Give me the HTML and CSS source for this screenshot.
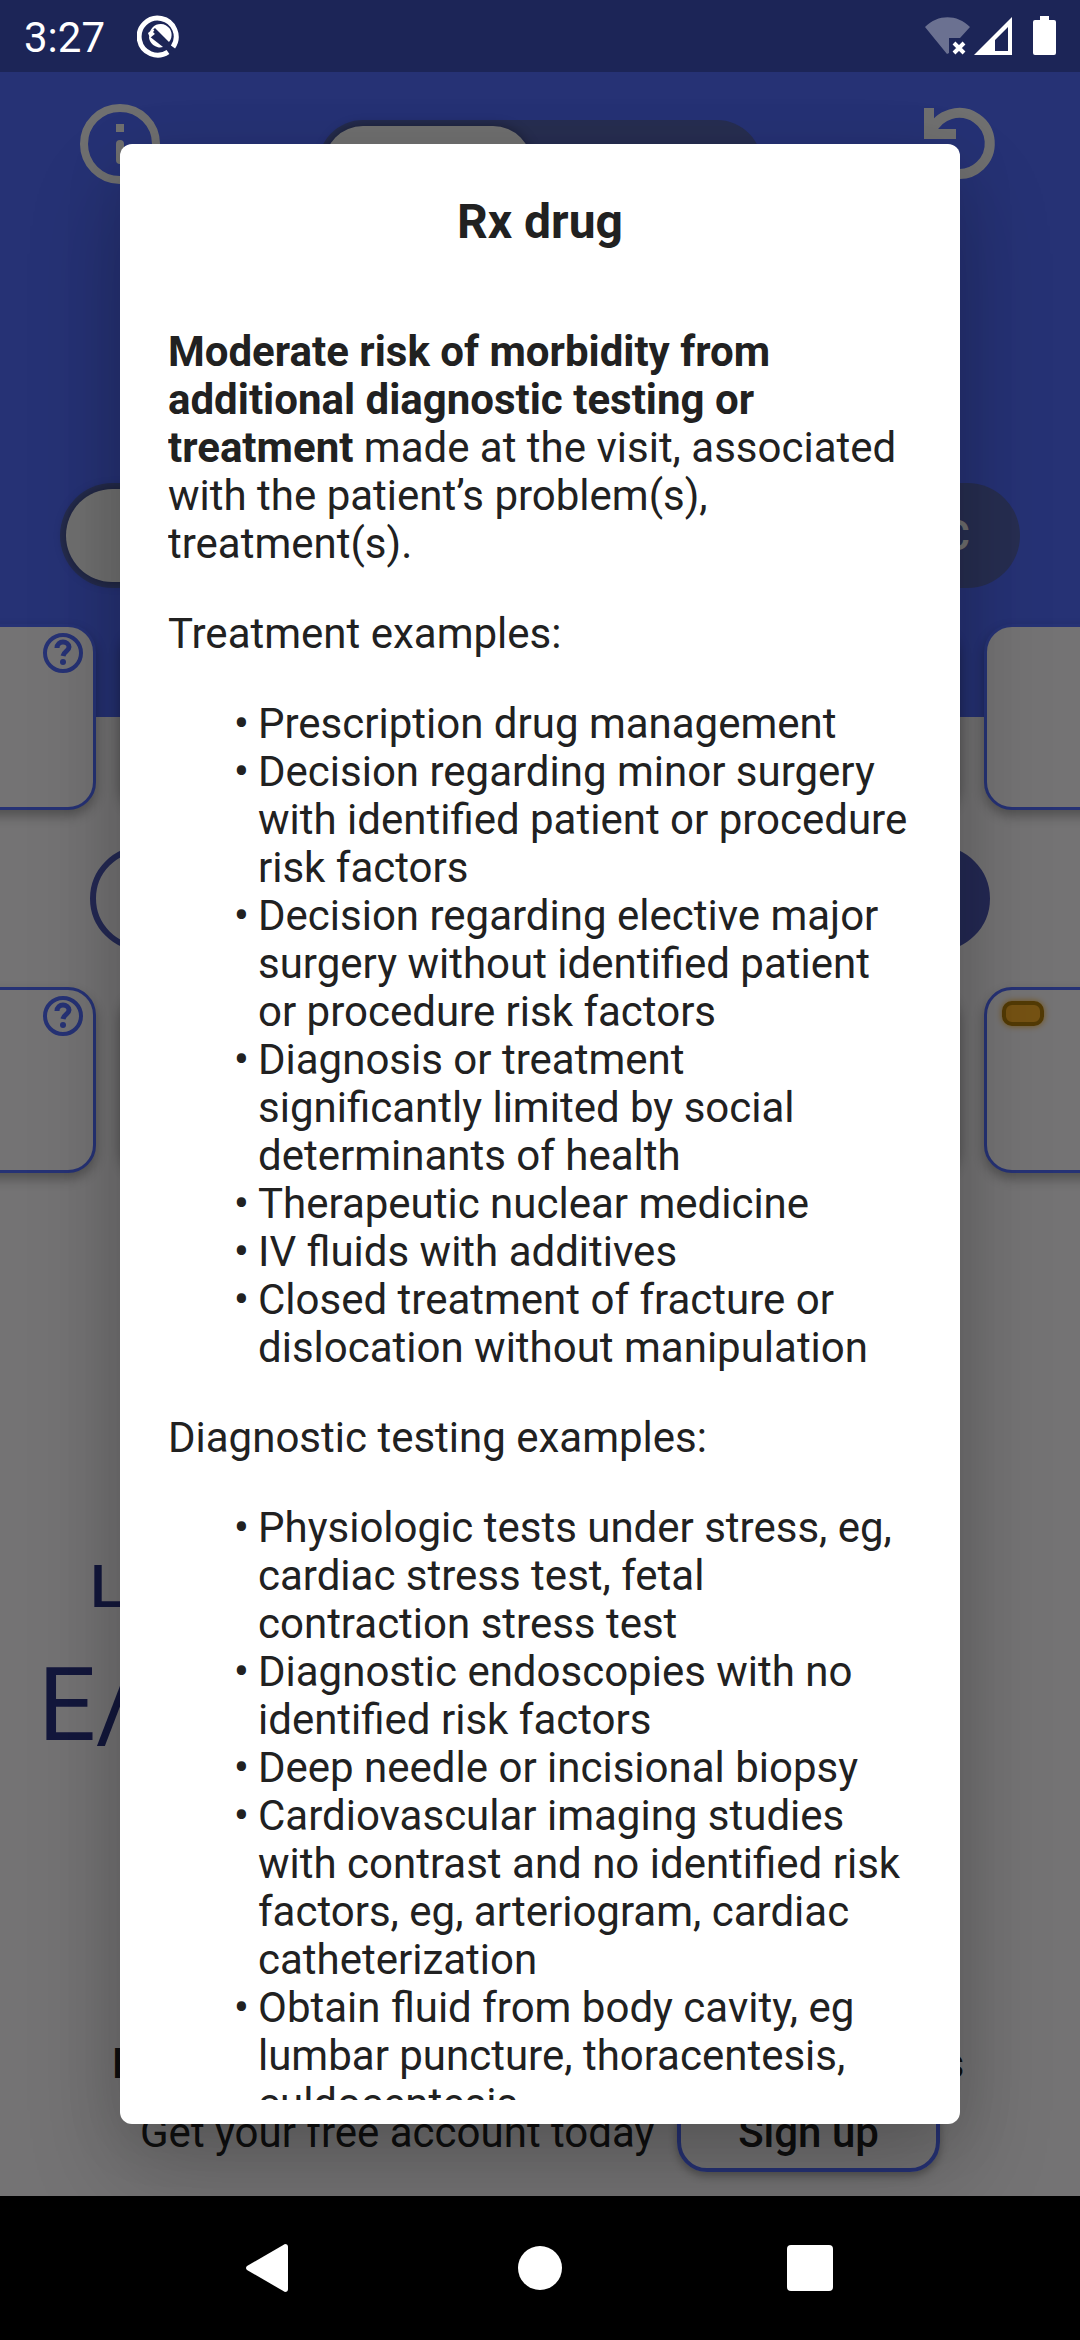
FILE: index.html
```html
<!DOCTYPE html>
<html lang="en">
<head>
    <meta charset="UTF-8">
    <meta name="viewport" content="width=device-width, initial-scale=1.0">
    <link rel="stylesheet" href="styles.css">
    <title>Rx drug</title>
</head>

<body>
    <div class="screen">
        <header class="header">
            <div class="appbar">
                <button class="icon-btn" type="button" aria-label="Info">
                    <svg width="96" height="96" viewBox="0 0 96 96" fill="none" stroke="currentColor" stroke-width="8">
                        <circle cx="48" cy="48" r="36"/>
                        <path d="M48 28v8"/>
                        <path d="M48 48v16" stroke-linecap="round"/>
                    </svg>
                </button>
                <div class="switch small">
                    <button class="thumb" type="button" aria-label="First mode"></button>
                    <button type="button" aria-label="Second mode"></button>
                </div>
                <button class="icon-btn" type="button" aria-label="Reset">
                    <svg width="96" height="96" viewBox="0 0 96 96">
                        <path d="M19 36A30.500 30.500 0 1 1 21 63" fill="none" stroke="currentColor" stroke-width="10"/>
                        <path d="M12 12h10v21h22v10H12z" fill="currentColor"/>
                    </svg>
                </button>
            </div>
            <div class="switch wide">
                <button class="thumb" type="button" aria-label="First group"></button>
                <button class="last" type="button">C</button>
            </div>
        </header>

        <main class="content">
            <div class="cards first">
                <div class="card">
                    <button class="help" type="button" aria-label="Help">
                        <svg width="48" height="48" viewBox="0 0 48 48" fill="none" stroke="currentColor">
                            <circle cx="24" cy="24" r="18" stroke-width="4"/>
                            <path d="M18 19c0-4 3-6 6-6s6 2 6 5c0 4-5 4-6 9" stroke-width="5"/>
                            <circle cx="24" cy="33" r="3" fill="currentColor" stroke="none"/>
                        </svg>
                    </button>
                </div>
                <div class="card"></div>
                <div class="card"></div>
            </div>
            <div class="outline-toggle">
                <button type="button" aria-label="Left option"></button>
                <button class="filled" type="button" aria-label="Right option"></button>
            </div>
            <div class="cards">
                <div class="card">
                    <button class="help" type="button" aria-label="Help">
                        <svg width="48" height="48" viewBox="0 0 48 48" fill="none" stroke="currentColor">
                            <circle cx="24" cy="24" r="18" stroke-width="4"/>
                            <path d="M18 19c0-4 3-6 6-6s6 2 6 5c0 4-5 4-6 9" stroke-width="5"/>
                            <circle cx="24" cy="33" r="3" fill="currentColor" stroke="none"/>
                        </svg>
                    </button>
                </div>
                <div class="card"></div>
                <div class="card"><span class="tag"></span></div>
            </div>
            <div class="result">
                <p class="level">L</p>
                <p class="code">E/</p>
            </div>
            <footer class="signup">
                <p class="notice"><span>H</span><span>s</span></p>
                <div class="signup-row">
                    <span>Get your free account today</span>
                    <button class="signup-btn" type="button">Sign up</button>
                </div>
            </footer>
        </main>

        <!-- dialog -->
        <div class="scrim">
            <section class="dialog" role="dialog" aria-labelledby="dialogTitle">
                <h1 id="dialogTitle">Rx drug</h1>
                <div class="dialog-body">
                    <p><b>Moderate risk of morbidity from additional diagnostic testing or treatment</b> made at the visit, associated with the patient’s problem(s), treatment(s).</p>
                    <p>Treatment examples:</p>
                    <ul>
                        <li>Prescription drug management</li>
                        <li>Decision regarding minor surgery with identified patient or procedure risk factors</li>
                        <li>Decision regarding elective major surgery without identified patient or procedure risk factors</li>
                        <li>Diagnosis or treatment significantly limited by social determinants of health</li>
                        <li>Therapeutic nuclear medicine</li>
                        <li>IV fluids with additives</li>
                        <li>Closed treatment of fracture or dislocation without manipulation</li>
                    </ul>
                    <p>Diagnostic testing examples:</p>
                    <ul>
                        <li>Physiologic tests under stress, eg, cardiac stress test, fetal contraction stress test</li>
                        <li>Diagnostic endoscopies with no identified risk factors</li>
                        <li>Deep needle or incisional biopsy</li>
                        <li>Cardiovascular imaging studies with contrast and no identified risk factors, eg, arteriogram, cardiac catheterization</li>
                        <li>Obtain fluid from body cavity, eg lumbar puncture, thoracentesis, culdocentesis</li>
                    </ul>
                </div>
            </section>
        </div>

        <div class="statusbar">
            <span class="clock">3:27</span>
            <svg class="q-icon" width="44" height="44" viewBox="0 0 44 44">
                <path d="M36 33A18.500 18.500 0 1 0 31 38" fill="none" stroke="#fff" stroke-width="5"/>
                <path d="M13 18A11 11 0 1 1 32 28L18 14z" fill="#fff"/>
                <path d="M12 22l14 11A11 11 0 0 1 12 22z" fill="#fff"/>
                <path d="M11 19l5-4 3 4-6 5z" fill="#fff"/>
                <path d="M17 17l19 19" stroke="#1c2656" stroke-width="3"/>
            </svg>
            <svg class="sys-icons" width="132" height="40" viewBox="0 0 132 40">
                <path d="M0 11C13-2 32-2 45 11L35 22H24v15L22 38z" fill="#fff" fill-opacity=".35"/>
                <path d="M29 27l10 10M39 27L29 37" stroke="#fff" stroke-width="4"/>
                <path d="M87 1v38H49zM83 11L70 24v11h13z" fill="#fff" fill-rule="evenodd"/>
                <path d="M115 0h9v4h5q2 0 2 2v31q0 2-2 2h-19q-2 0-2-2V6q0-2 2-2h5z" fill="#fff"/>
            </svg>
        </div>
    </div>

    <nav class="navbar">
        <button type="button" aria-label="Back">
            <svg width="48" height="48" viewBox="0 0 48 48"><path d="M39 0q3 0 3 3v42q0 3-3 3L1 26q-2-2 0-4z" fill="#fff"/></svg>
        </button>
        <button type="button" aria-label="Home">
            <svg width="48" height="48" viewBox="0 0 48 48"><circle cx="24" cy="24" r="22" fill="#fff"/></svg>
        </button>
        <button type="button" aria-label="Recent apps">
            <svg width="48" height="48" viewBox="0 0 48 48"><rect x="1" y="1" width="46" height="46" rx="4" fill="#fff"/></svg>
        </button>
    </nav>
</body>
</html>
```
FILE: styles.css
```css
* {
    box-sizing: border-box;
}
body {
    margin: 0;
    height: 100vh;
    display: flex;
    flex-direction: column;
    font-family: Roboto, "Liberation Sans", sans-serif;
    font-size: 42px;
    line-height: 48px;
    color: #212121;
    background-color: #000;
}
h1, p, ul {
    margin: 0;
    padding: 0;
}
button {
    padding: 0;
    border: none;
    background: none;
    font: inherit;
    color: inherit;
}
svg {
    display: block;
}
.screen {
    position: relative;
    flex: 1;
    min-height: 0;
    display: flex;
    flex-direction: column;
    overflow: hidden;
    background-color: #fcfafc;
}

/* header */
.header {
    padding: 96px 60px 129px;
    background-color: #536dfe;
    color: #f5f5f5;
}
.appbar {
    display: flex;
    justify-content: space-between;
    align-items: flex-start;
    padding: 0 12px;
}
.switch {
    display: flex;
    padding: 6px;
    border-radius: 60px;
    background-color: #5564b0;
}
.switch > button {
    flex: 1;
    border-radius: 60px;
}
.switch > .thumb {
    background-color: #f5f5f5;
    box-shadow: 0 0 12px rgba(0, 0, 0, .35);
}
.small {
    width: 444px;
    height: 90px;
    margin-top: 24px;
}
.small > .thumb {
    flex: 0 0 208px;
}
.wide {
    height: 105px;
    margin-top: 273px;
}
.switch > .last {
    padding-right: 44px;
    text-align: right;
    font-weight: 500;
}

/* page content */
.content {
    flex: 1;
    display: flex;
    flex-direction: column;
    gap: 36px;
}
.cards {
    display: flex;
    justify-content: center;
    gap: 24px;
}
.first {
    margin-top: -93px;
}
.card {
    flex: 0 0 calc(100% - 240px);
    height: 186px;
    border: 3px solid #536dfe;
    border-radius: 28px;
    background-color: #fcfafc;
    box-shadow: 0 6px 12px rgba(0, 0, 0, .3);
}
.help {
    display: block;
    margin: 2px 6px 0 auto;
    color: #536dfe;
}
.tag {
    display: block;
    width: 42px;
    height: 25px;
    margin: 11px 15px;
    border: 4px solid #b47e0b;
    border-radius: 10px;
    background-color: #ffb42b;
    box-shadow: 0 0 6px #ffb42b;
}
.outline-toggle {
    display: flex;
    height: 105px;
    margin: 0 90px;
    border: 6px solid #4f5ab8;
    border-radius: 60px;
    background: linear-gradient(to right, transparent 50%, #4f5ab8 50%) border-box;
}
.outline-toggle > button {
    flex: 1;
}
.result {
    display: flex;
    flex-direction: column;
    gap: 22px;
    margin-top: 342px;
    color: #2a3284;
}
.level {
    padding-left: 90px;
    font-size: 60px;
    font-weight: 500;
    line-height: 72px;
}
.code {
    padding-left: 38px;
    font-size: 102px;
    line-height: 120px;
}
.signup {
    display: flex;
    flex-direction: column;
    gap: 6px;
    margin-top: auto;
    padding: 0 116px 24px 112px;
}
.notice {
    display: flex;
    justify-content: space-between;
    font-weight: 500;
}
.signup-row {
    display: flex;
    align-items: center;
    justify-content: space-between;
    padding: 0 24px 0 28px;
}
.signup-btn {
    width: 263px;
    height: 78px;
    border: 4px solid #536dfe;
    border-radius: 30px;
    font-weight: 500;
    box-shadow: 0 4px 8px rgba(0, 0, 0, .3);
}

/* dialog */
.scrim {
    position: absolute;
    inset: 0;
    display: flex;
    padding: 144px 120px 72px;
    background-color: rgba(0, 0, 0, .54);
}
.dialog {
    flex: 1;
    display: flex;
    flex-direction: column;
    gap: 78px;
    padding: 50px 48px 24px;
    border-radius: 12px;
    background-color: #fff;
    box-shadow: 0 48px 96px rgba(0, 0, 0, .2), 0 12px 60px rgba(0, 0, 0, .1);
}
.dialog > h1 {
    font-size: 48px;
    line-height: 56px;
    text-align: center;
}
.dialog-body {
    flex: 1;
    min-height: 0;
    overflow-y: auto;
    scrollbar-width: none;
}
.dialog-body > p,
.dialog-body > ul {
    margin-bottom: 42px;
}
.dialog-body > ul {
    padding-left: 90px;
    list-style: none;
}
.dialog-body li::before {
    content: "•";
    display: inline-block;
    width: 24px;
    margin-left: -24px;
    font-weight: 500;
}

/* system bars */
.statusbar {
    position: absolute;
    top: 0;
    left: 0;
    right: 0;
    display: flex;
    align-items: center;
    height: 72px;
    padding: 0 23px 0 24px;
    color: #fff;
    background-color: rgba(0, 0, 0, .25);
}
.clock {
    padding-top: 3px;
}
.q-icon {
    margin-left: 32px;
}
.sys-icons {
    margin-left: auto;
}
.navbar {
    display: grid;
    grid-template-columns: repeat(3, 1fr);
    place-items: center;
    height: 144px;
    padding: 0 12.5%;
    background-color: #000;
}
```
